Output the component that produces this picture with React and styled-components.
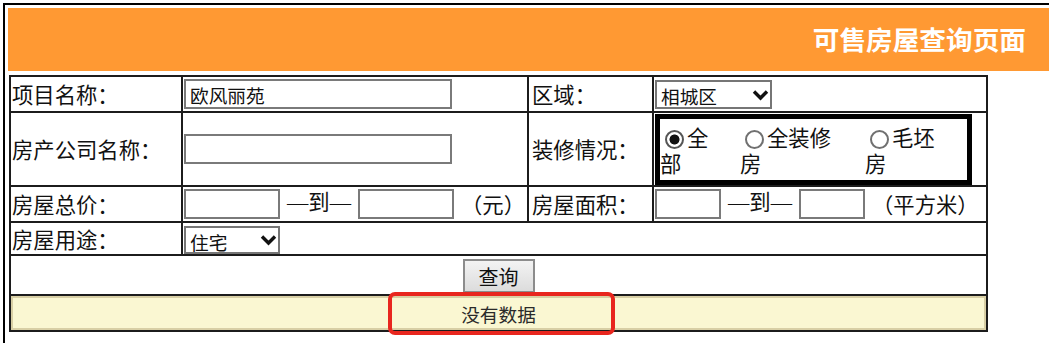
import styled, { createGlobalStyle } from 'styled-components';

const GlobalStyle = createGlobalStyle`
  * { box-sizing: border-box; }
  html, body { margin: 0; overflow: hidden; background: #fff; }
  body { font-family: "Noto Sans CJK SC", sans-serif; color: #111; }
`;

const line = '#1c1c1c';
const cjk = '"Noto Sans CJK SC", sans-serif';

const Frame = styled.div`
  margin: 3px 0 0 3px;
  width: 1090px;
  height: 346px;
  border: 2px solid #000;
  padding: 3px;
`;

const TitleBar = styled.div`
  height: 63px;
  background: #ff9933;
  display: flex;
  align-items: center;
  justify-content: flex-end;
  padding: 0 62px 2px 0;
`;

const Title = styled.h1`
  margin: 0;
  font: bold 26.67px/1.2 ${cjk};
  color: #fff;
`;

const FormTable = styled.table`
  margin: 4px 0 0 1px;
  width: 979px;
  table-layout: fixed;
  border-collapse: separate;
  border-spacing: 0;
  border-top: 2px solid ${line};
  border-left: 2px solid ${line};
  font-size: 21.33px;
  line-height: 1.2;
`;

const Col = styled.col`
  width: ${(p) => p.$w}px;
`;

const Row = styled.tr`
  height: ${(p) => p.$h}px;
`;

const Cell = styled.td`
  border-right: 2px solid ${line};
  border-bottom: 2px solid ${line};
  padding: ${(p) => p.$pt || 0}px 0 0 ${(p) => p.$pl ?? 1}px;
  text-align: ${(p) => p.$align || 'left'};
  vertical-align: ${(p) => p.$valign || 'middle'};
  white-space: nowrap;
`;

const Inline = styled.div`
  display: flex;
  align-items: center;
  gap: 7px;
`;

const Between = styled.span`
  font-family: "Liberation Serif", "Noto Sans CJK SC", serif;
  width: 64px;
  text-align: center;
`;

const TextInput = styled.input`
  display: block;
  width: ${(p) => p.$w}px;
  height: 30px;
  margin: 0;
  padding: 0 4px;
  border: 2px solid #7a7a7a;
  border-radius: 0;
  font: 18.67px ${cjk};
  color: #111;
  outline: none;
`;

const SelectWrap = styled.span`
  position: relative;
  display: inline-block;
  vertical-align: middle;
`;

const Select = styled.select`
  appearance: none;
  display: block;
  width: ${(p) => p.$w}px;
  height: ${(p) => p.$h}px;
  margin: 0;
  padding: 0 0 0 4px;
  border: 2px solid #767676;
  border-radius: 0;
  background: #fff;
  font: 18.67px ${cjk};
  color: #111;
  outline: none;
`;

const Chevron = styled.svg`
  position: absolute;
  right: 3px;
  top: 50%;
  transform: translateY(-50%);
  pointer-events: none;
`;

const RadioBox = styled.div`
  width: 317px;
  border: 5px solid #000;
  padding: 5px 0 4px;
  display: grid;
  grid-template-columns: 80px 125px 1fr;
  line-height: 26px;
  white-space: normal;
`;

const RadioItem = styled.label`
  max-width: ${(p) => p.$max}px;
`;

const Radio = styled.input.attrs({ type: 'radio', name: 'decor' })`
  appearance: none;
  display: inline-block;
  width: 19px;
  height: 19px;
  margin: 0 3px 0 5px;
  border: 2px solid #707070;
  border-radius: 50%;
  vertical-align: -3px;
  background: #fff;
  &:checked {
    border-color: #555;
    background: radial-gradient(circle, #111 0 4.6px, #fff 5.4px);
  }
`;

const QueryButton = styled.button`
  display: block;
  margin: 0 auto;
  width: 72px;
  height: 34px;
  padding: 0;
  border: 2px solid #8c8c8c;
  background: linear-gradient(#f3f3f3, #dcdcdc);
  font: 20px ${cjk};
  color: #111;
`;

const Notice = styled.div`
  position: relative;
  height: 34px;
  border: 2px solid #d8cfa5;
  background: #faf7d2;
  display: flex;
  align-items: center;
  justify-content: center;
  font: 18.67px ${cjk};
  color: #2a2a2a;
`;

const RedMark = styled.div`
  position: absolute;
  left: 375px;
  top: -6px;
  width: 227px;
  height: 43px;
  border: 4px solid #e8261e;
  border-radius: 7px;
  pointer-events: none;
`;

const DownArrow = () => (
  <Chevron width="17" height="12" viewBox="0 0 17 12">
    <polyline points="2,2.5 8.5,9 15,2.5" fill="none" stroke="#111" strokeWidth="3.4" />
  </Chevron>
);

const Dropdown = ({ w, h, options }) => (
  <SelectWrap>
    <Select $w={w} $h={h} defaultValue={options[0]}>
      {options.map((o) => (
        <option key={o}>{o}</option>
      ))}
    </Select>
    <DownArrow />
  </SelectWrap>
);

const Range = ({ w, unit }) => (
  <Inline>
    <TextInput $w={w} />
    <Between>—到—</Between>
    <TextInput $w={w} />
    <span>{unit}</span>
  </Inline>
);

const decorations = [
  { label: '全部', max: 60, checked: true },
  { label: '全装修房', max: 100 },
  { label: '毛坯房', max: 80 }
];

const App = () => (
  <>
    <GlobalStyle />
    <Frame>
      <TitleBar>
        <Title>可售房屋查询页面</Title>
      </TitleBar>
      <FormTable>
        <colgroup>
          <Col $w={172} />
          <Col $w={346} />
          <Col $w={125} />
          <Col $w={334} />
        </colgroup>
        <tbody>
          <Row $h={36}>
            <Cell>项目名称：</Cell>
            <Cell>
              <TextInput $w={268} defaultValue="欧风丽苑" />
            </Cell>
            <Cell $pl={3}>区域：</Cell>
            <Cell>
              <Dropdown w={117} h={29} options={['相城区', '姑苏区', '吴中区']} />
            </Cell>
          </Row>
          <Row $h={74}>
            <Cell>房产公司名称：</Cell>
            <Cell>
              <TextInput $w={268} />
            </Cell>
            <Cell $pl={3}>装修情况：</Cell>
            <Cell>
              <RadioBox>
                {decorations.map(({ label, max, checked }) => (
                  <RadioItem key={label} $max={max}>
                    <Radio defaultChecked={checked} />
                    {label}
                  </RadioItem>
                ))}
              </RadioBox>
            </Cell>
          </Row>
          <Row $h={36}>
            <Cell>房屋总价：</Cell>
            <Cell>
              <Range w={96} unit="（元）" />
            </Cell>
            <Cell $pl={3}>房屋面积：</Cell>
            <Cell>
              <Range w={66} unit="（平方米）" />
            </Cell>
          </Row>
          <Row $h={33}>
            <Cell>房屋用途：</Cell>
            <Cell colSpan={3}>
              <Dropdown w={96} h={28} options={['住宅', '商业', '办公']} />
            </Cell>
          </Row>
          <Row $h={40}>
            <Cell colSpan={4} $pl={0} $pt={3} $valign="top">
              <QueryButton type="button">查询</QueryButton>
            </Cell>
          </Row>
          <Row $h={36}>
            <Cell colSpan={4} $pl={0}>
              <Notice>
                没有数据
                <RedMark />
              </Notice>
            </Cell>
          </Row>
        </tbody>
      </FormTable>
    </Frame>
  </>
);

export default App;
